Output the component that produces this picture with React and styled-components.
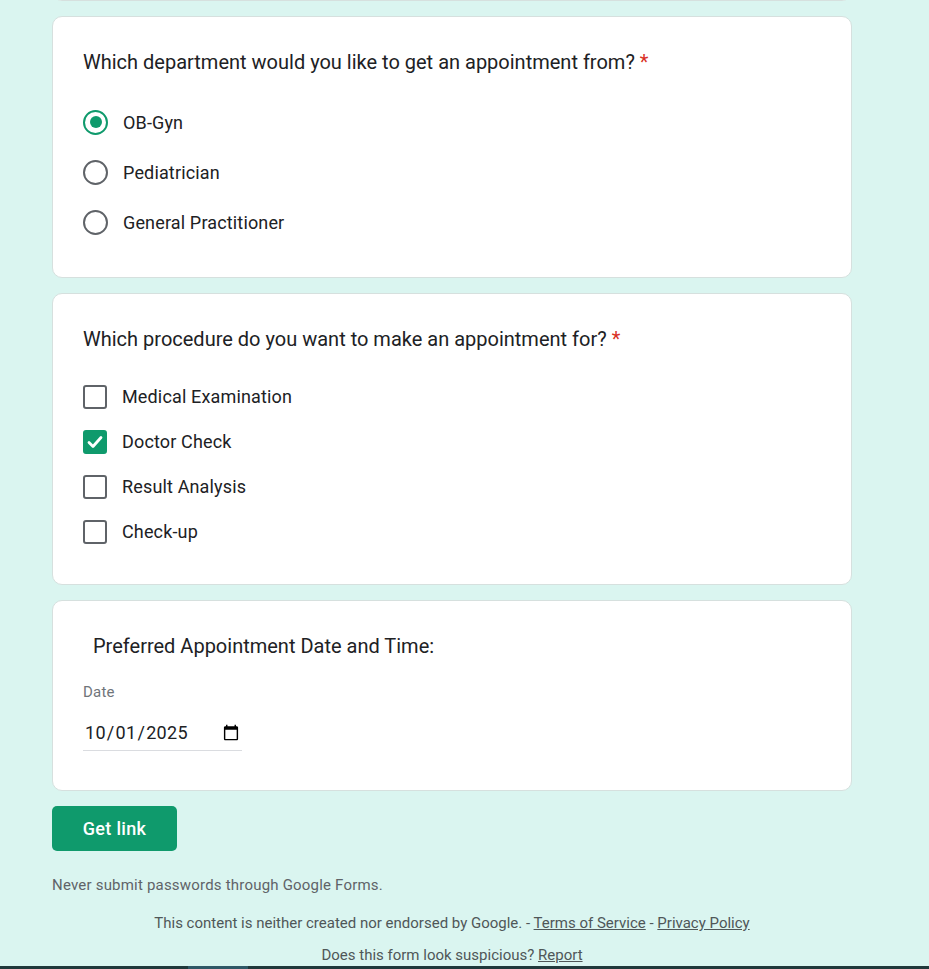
import React from "react";
import styled, { createGlobalStyle } from "styled-components";

const Global = createGlobalStyle`
  html, body { margin: 0; padding: 0; background: #daf5f0; }
  body { font-family: Roboto, "Noto Sans", Arial, sans-serif; color: #202124; }
  * { box-sizing: border-box; }
`;

const Page = styled.div`
  width: 929px;
  height: 969px;
  overflow: hidden;
  display: flex;
  flex-direction: column;
`;

const Column = styled.div`
  width: 800px;
  margin-left: 52px;
  display: flex;
  flex-direction: column;
  gap: 15px;
`;

const Card = styled.div`
  background: #fff;
  border: 1px solid #d6e0de;
  border-radius: 10px;
  padding: 30px;
  display: flex;
  flex-direction: column;
`;

const PrevCard = styled(Card)`
  height: 20px;
  margin-top: -19px;
  padding: 0;
`;

const Title = styled.div`
  font-size: 20px;
  line-height: 30px;
  color: #202124;
  padding-left: ${(p) => p.$indent || 0}px;
`;

const Req = styled.span`
  color: #d93025;
  margin-left: 5px;
`;

const Options = styled.div`
  margin-top: 20px;
  display: flex;
  flex-direction: column;
`;

const OptionRow = styled.div`
  height: ${(p) => p.$h}px;
  display: flex;
  align-items: center;
  gap: ${(p) => p.$gap}px;
  font-size: 18px;
  letter-spacing: 0.15px;
  color: #202124;
`;

const RadioOuter = styled.span`
  width: 25px;
  height: 25px;
  border-radius: 50%;
  border: 2px solid ${(p) => (p.$on ? "#0f9a6c" : "#5f6368")};
  display: flex;
  align-items: center;
  justify-content: center;
  flex: none;
`;

const RadioDot = styled.span`
  width: 12px;
  height: 12px;
  border-radius: 50%;
  background: #0f9a6c;
`;

const Box = styled.span`
  width: 24px;
  height: 24px;
  border-radius: 3px;
  border: 2px solid ${(p) => (p.$on ? "#0f9a6c" : "#5f6368")};
  background: ${(p) => (p.$on ? "#0f9a6c" : "#fff")};
  display: flex;
  align-items: center;
  justify-content: center;
  flex: none;
`;

const Label = styled.div`
  margin-top: 21px;
  font-size: 15px;
  line-height: 20px;
  color: #70757a;
  letter-spacing: 0.2px;
`;

const DateField = styled.input`
  margin-top: 9px;
  margin-bottom: 9px;
  width: 159px;
  height: 40px;
  border: none;
  border-bottom: 1px solid #dadce0;
  outline: none;
  padding: 4px 0 0 1px;
  font-family: Roboto, Arial, sans-serif;
  font-size: 18px;
  letter-spacing: 0.3px;
  color: #202124;
  background: transparent;
`;

const Footer = styled.div`
  display: flex;
  flex-direction: column;
`;

const Button = styled.button`
  width: 125px;
  height: 45px;
  border: none;
  border-radius: 5px;
  background: #0f9a6c;
  color: #fff;
  font-family: Roboto, Arial, sans-serif;
  font-weight: 500;
  font-size: 18px;
  letter-spacing: 0.3px;
  padding: 0;
`;

const Warning = styled.div`
  margin-top: 24px;
  font-size: 15px;
  line-height: 20px;
  color: #5f6368;
  letter-spacing: 0.2px;
`;

const FooterLine = styled.div`
  margin-top: ${(p) => p.$mt}px;
  text-align: center;
  font-size: 15px;
  line-height: 20px;
  color: #4f5758;
`;

const FooterLink = styled.a`
  color: #4f5758;
  text-decoration: underline;
`;

const Bar = styled.div`
  margin-top: auto;
  height: 3px;
  background: #20393b;
  display: flex;
`;

const BarSeg = styled.div`
  margin-left: 188px;
  width: 60px;
  background: #2f5866;
`;

const Check = () => (
  <svg width="18" height="18" viewBox="0 0 18 18">
    <path d="M3 9.5 L7 13.5 L15 4.5" fill="none" stroke="#fff" strokeWidth="2.8" strokeLinecap="round" strokeLinejoin="round" />
  </svg>
);

const departments = [
  { label: "OB-Gyn", on: true },
  { label: "Pediatrician", on: false },
  { label: "General Practitioner", on: false },
];

const procedures = [
  { label: "Medical Examination", on: false },
  { label: "Doctor Check", on: true },
  { label: "Result Analysis", on: false },
  { label: "Check-up", on: false },
];

export default function App() {
  return (
    <>
      <Global />
      <Page>
        <Column>
          <PrevCard />
          <Card>
            <Title>
              Which department would you like to get an appointment from?<Req>*</Req>
            </Title>
            <Options>
              {departments.map((d) => (
                <OptionRow key={d.label} $h={50} $gap={15}>
                  <RadioOuter $on={d.on}>{d.on && <RadioDot />}</RadioOuter>
                  {d.label}
                </OptionRow>
              ))}
            </Options>
          </Card>
          <Card>
            <Title>
              Which procedure do you want to make an appointment for?<Req>*</Req>
            </Title>
            <Options>
              {procedures.map((d) => (
                <OptionRow key={d.label} $h={45} $gap={15}>
                  <Box $on={d.on}>{d.on && <Check />}</Box>
                  {d.label}
                </OptionRow>
              ))}
            </Options>
          </Card>
          <Card>
            <Title $indent={10}>Preferred Appointment Date and Time:</Title>
            <Label>Date</Label>
            <DateField type="date" value="2025-10-01" onChange={() => {}} />
          </Card>
          <Footer>
            <Button>Get link</Button>
            <Warning>Never submit passwords through Google Forms.</Warning>
          </Footer>
        </Column>
        <Column>
          <FooterLine $mt={18}>
            This content is neither created nor endorsed by Google. - <FooterLink>Terms of Service</FooterLink> - <FooterLink>Privacy Policy</FooterLink>
          </FooterLine>
          <FooterLine $mt={-3}>
            Does this form look suspicious? <FooterLink>Report</FooterLink>
          </FooterLine>
        </Column>
        <Bar>
          <BarSeg />
        </Bar>
      </Page>
    </>
  );
}
